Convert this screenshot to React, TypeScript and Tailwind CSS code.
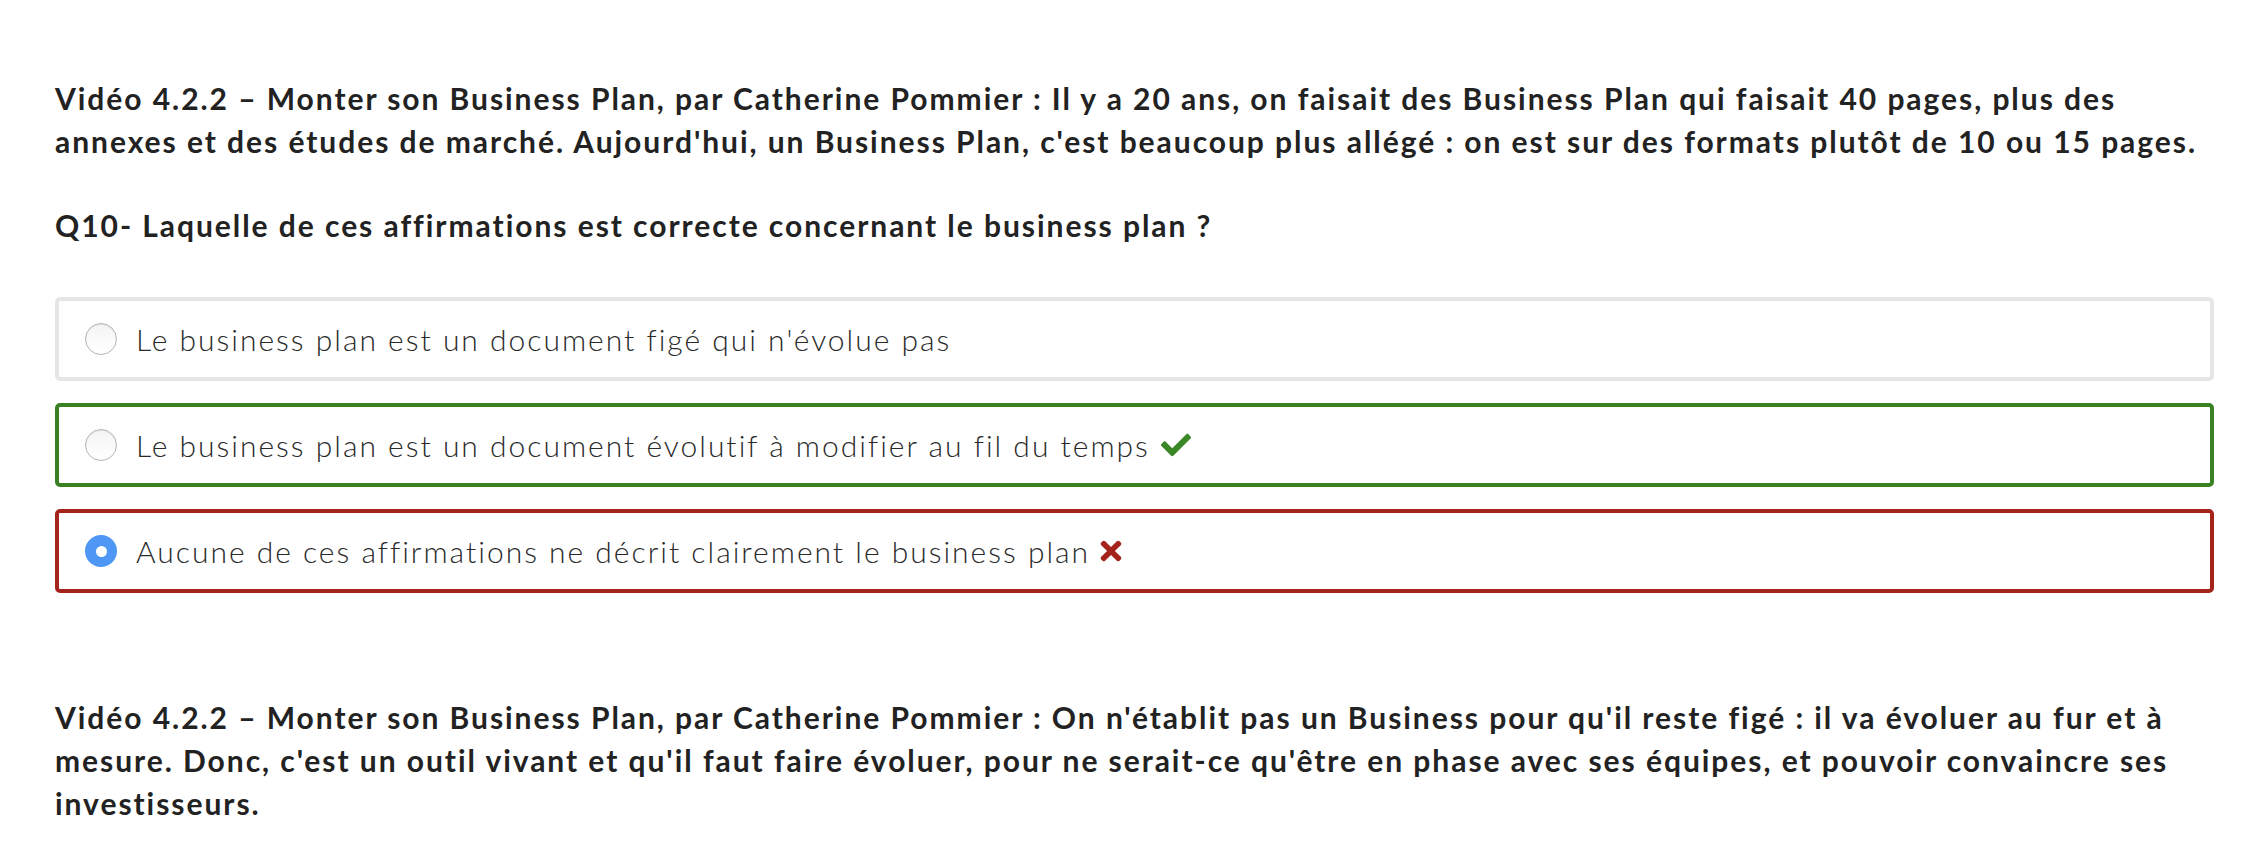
import React from "react";
import { FaCheck, FaTimes } from "react-icons/fa";

const font = { fontFamily: "Lato, 'Noto Sans', sans-serif" };

function Radio({ checked }: { checked?: boolean }) {
  if (checked) {
    return (
      <span className="flex h-[32px] w-[32px] shrink-0 items-center justify-center rounded-full bg-[#4f97f4]">
        <span className="h-[11px] w-[11px] rounded-full bg-white" />
      </span>
    );
  }
  return (
    <span className="h-[32px] w-[32px] shrink-0 rounded-full border border-[#b5b5b5] bg-gradient-to-b from-[#f4f4f4] to-white shadow-[inset_0_1px_1px_rgba(0,0,0,0.08)]" />
  );
}

function Option({
  text,
  border,
  checked,
  icon,
}: {
  text: string;
  border: string;
  checked?: boolean;
  icon?: React.ReactNode;
}) {
  return (
    <div className={`flex h-[84px] items-center rounded-[5px] border-[4px] pl-[26px] ${border}`}>
      <Radio checked={checked} />
      <span className="ml-[19px] text-[30px] font-light tracking-[2px] text-[#2a2a2a]">{text}</span>
      {icon}
    </div>
  );
}

export default function App() {
  return (
    <div className="min-h-[864px] bg-white pl-[55px] pr-[50px] pt-[77px] text-[#222]" style={font}>
      <p className="text-[30px] font-bold leading-[43px] tracking-[1.95px]">
        Vidéo 4.2.2 – Monter son Business Plan, par Catherine Pommier : Il y a 20 ans, on faisait des Business Plan qui faisait 40 pages, plus des annexes et des études de marché. Aujourd'hui, un Business Plan, c'est beaucoup plus allégé : on est sur des formats plutôt de 10 ou 15 pages.
      </p>
      <p className="mt-[41px] text-[30px] font-bold leading-[43px] tracking-[1.95px]">
        Q10- Laquelle de ces affirmations est correcte concernant le business plan ?
      </p>
      <div className="mt-[50px] flex flex-col gap-[22px]">
        <Option text="Le business plan est un document figé qui n'évolue pas" border="border-[#e6e6e6]" />
        <Option
          text="Le business plan est un document évolutif à modifier au fil du temps"
          border="border-[#3a8025]"
          icon={<FaCheck className="ml-[9px] h-[30px] w-[34px] text-[#3a8727]" />}
        />
        <Option
          text="Aucune de ces affirmations ne décrit clairement le business plan"
          border="border-[#a4241c]"
          checked
          icon={<FaTimes className="ml-[9px] h-[30px] w-[24px] text-[#a4241c]" />}
        />
      </div>
      <p className="mt-[103px] text-[30px] font-bold leading-[43px] tracking-[1.95px]">
        Vidéo 4.2.2 – Monter son Business Plan, par Catherine Pommier : On n'établit pas un Business pour qu'il reste figé : il va évoluer au fur et à mesure. Donc, c'est un outil vivant et qu'il faut faire évoluer, pour ne serait-ce qu'être en phase avec ses équipes, et pouvoir convaincre ses investisseurs.
      </p>
    </div>
  );
}
